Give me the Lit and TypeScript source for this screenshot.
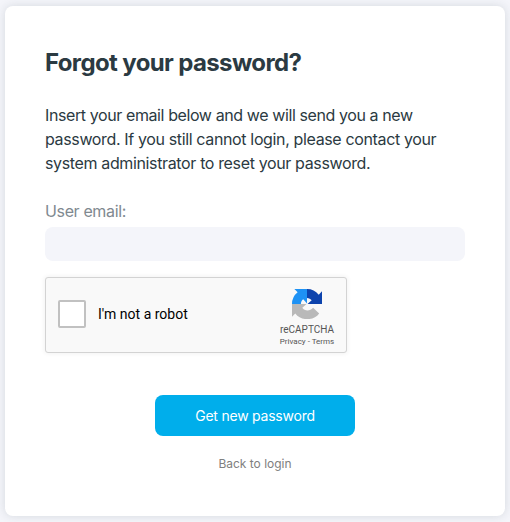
import { LitElement, html, css } from "lit";
import { customElement } from "lit/decorators.js";

@customElement("recaptcha-box")
class RecaptchaBox extends LitElement {
  static styles = css`
    :host {
      box-sizing: border-box;
      display: flex;
      align-items: center;
      width: 302px;
      height: 76px;
      padding: 0 0 2px 12px;
      border: 1px solid #d3d3d3;
      border-radius: 3px;
      background: #f9f9f9;
      box-shadow: 0 0 4px 1px rgba(0, 0, 0, 0.05);
      font-family: Roboto, sans-serif;
      color: #000;
    }
    .check {
      box-sizing: border-box;
      width: 28px;
      height: 28px;
      border: 2px solid #c1c1c1;
      border-radius: 2px;
      background: #fff;
    }
    .label {
      margin-left: 12px;
      font-size: 14px;
      line-height: 18px;
      white-space: nowrap;
    }
    .brand {
      display: flex;
      flex-direction: column;
      align-items: center;
      align-self: flex-start;
      width: 70px;
      margin-left: auto;
      margin-right: 4px;
      padding-top: 11px;
      color: #555;
      white-space: nowrap;
    }
    .name {
      margin-top: 5px;
      font-size: 10px;
      line-height: 12px;
    }
    .links {
      font-size: 8px;
      line-height: 12px;
    }
  `;
  render() {
    return html`
      <div class="check"></div>
      <div class="label">I'm not a robot</div>
      <div class="brand">
        <svg width="30" height="30" viewBox="0 0 64 64">
          <path fill="#1e92f4" d="M32 0H5l7 7A32 32 0 0 0 0 32h19c0-4 2-8 5-10l8 9z"/>
          <path fill="#0d43ad" d="M64 32V5l-7 7A32 32 0 0 0 32 0v19c4 0 8 2 10 5l-9 8z"/>
          <path fill="#b9b9b9" d="M0 32v27l7-7c13 17 39 16 51 0L45 40c-7 8-18 7-23 0l9-8z"/>
        </svg>
        <div class="name">reCAPTCHA</div>
        <div class="links">Privacy - Terms</div>
      </div>
    `;
  }
}

@customElement("app-root")
class AppRoot extends LitElement {
  static styles = css`
    :host {
      box-sizing: border-box;
      display: block;
      height: 522px;
      padding: 6px 5px;
      background: #f4f5fa;
      overflow: hidden;
      font-family: Inter, sans-serif;
      color: #2b3a42;
    }
    .card {
      box-sizing: border-box;
      display: flex;
      flex-direction: column;
      height: 510px;
      padding: 42px 40px 0;
      border-radius: 8px;
      background: #fff;
      box-shadow: 0 0 10px rgba(43, 58, 66, 0.15);
    }
    h1 {
      margin: 0;
      font-size: 24px;
      line-height: 30px;
      font-weight: 700;
      letter-spacing: -0.63px;
      white-space: nowrap;
    }
    p {
      margin: 25px 0 0;
      font-size: 16px;
      line-height: 24px;
      letter-spacing: -0.36px;
      white-space: nowrap;
    }
    .first {
      letter-spacing: -0.4px;
    }
    label {
      margin-top: 24px;
      font-size: 16px;
      line-height: 24px;
      letter-spacing: -0.36px;
      color: #808990;
    }
    input {
      box-sizing: border-box;
      width: 100%;
      height: 34px;
      margin: 4px 0 16px;
      border: 0;
      border-radius: 8px;
      background: #f4f5fa;
    }
    button {
      align-self: center;
      width: 200px;
      height: 41px;
      margin-top: 42px;
      padding: 0;
      border: 0;
      border-radius: 8px;
      background: #00aeeb;
      color: #fff;
      font: 14px/20px Inter, sans-serif;
      letter-spacing: -0.23px;
    }
    .back {
      align-self: center;
      margin-top: 20px;
      font-size: 12px;
      line-height: 16px;
      color: #808080;
    }
  `;
  render() {
    return html`
      <div class="card">
        <h1>Forgot your password?</h1>
        <p>
          <span class="first">Insert your email below and we will send you a new</span><br />
          password. If you still cannot login, please contact your<br />
          system administrator to reset your password.
        </p>
        <label for="email">User email:</label>
        <input id="email" type="email" />
        <recaptcha-box></recaptcha-box>
        <button>Get new password</button>
        <div class="back">Back to login</div>
      </div>
    `;
  }
}
